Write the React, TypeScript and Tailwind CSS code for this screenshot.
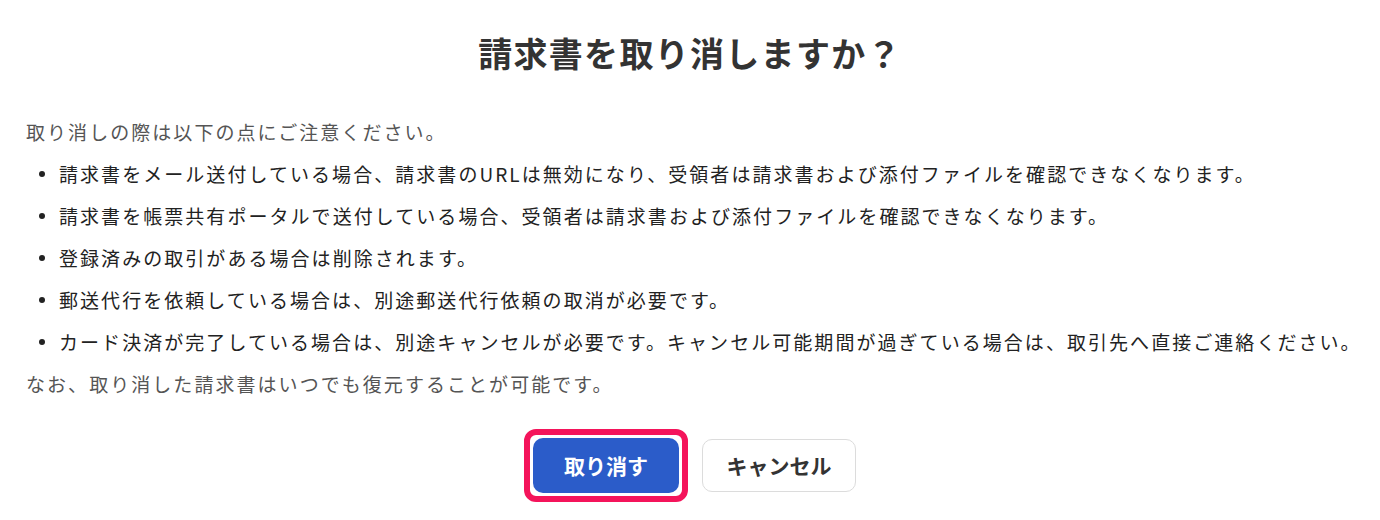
const notes = [
  "請求書をメール送付している場合、請求書のURLは無効になり、受領者は請求書および添付ファイルを確認できなくなります。",
  "請求書を帳票共有ポータルで送付している場合、受領者は請求書および添付ファイルを確認できなくなります。",
  "登録済みの取引がある場合は削除されます。",
  "郵送代行を依頼している場合は、別途郵送代行依頼の取消が必要です。",
  "カード決済が完了している場合は、別途キャンセルが必要です。キャンセル可能期間が過ぎている場合は、取引先へ直接ご連絡ください。",
];

export default function App() {
  return (
    <div className="h-[520px] w-[1380px] bg-white font-['Noto_Sans_CJK_JP','Noto_Sans',sans-serif]">
      {/* Title */}
      <div className="flex h-[104px] items-center justify-center">
        <h1 className="text-[34px] font-bold tracking-[1.3px] text-[#333]">
          請求書を取り消しますか？
        </h1>
      </div>

      {/* Body */}
      <div className="mt-[7px] whitespace-nowrap pl-[26px] pr-[10px] text-[19px] tracking-[2.05px]">
        <p className="leading-[42px] text-[#555]">
          取り消しの際は以下の点にご注意ください。
        </p>
        <ul>
          {notes.map((n) => (
            <li key={n} className="flex items-center leading-[42px] text-[#222]">
              <span className="ml-[13px] mr-[14px] h-[6px] w-[6px] shrink-0 rounded-full bg-[#222]" />
              {n}
            </li>
          ))}
        </ul>
        <p className="leading-[42px] text-[#555]">
          なお、取り消した請求書はいつでも復元することが可能です。
        </p>
      </div>

      {/* Actions */}
      <div className="mt-[24px] flex items-center justify-center gap-[14px]">
        <div className="rounded-[12px] border-[6px] border-[#f4145b] p-[3px]">
          <button className="flex h-[55px] w-[146px] items-center justify-center rounded-[10px] bg-[#2b5cc9] text-[21px] font-bold text-white">
            取り消す
          </button>
        </div>
        <button className="flex h-[53px] w-[154px] items-center justify-center rounded-[10px] border border-[#dcdcdc] bg-white text-[21px] font-bold text-[#333]">
          キャンセル
        </button>
      </div>
    </div>
  );
}
